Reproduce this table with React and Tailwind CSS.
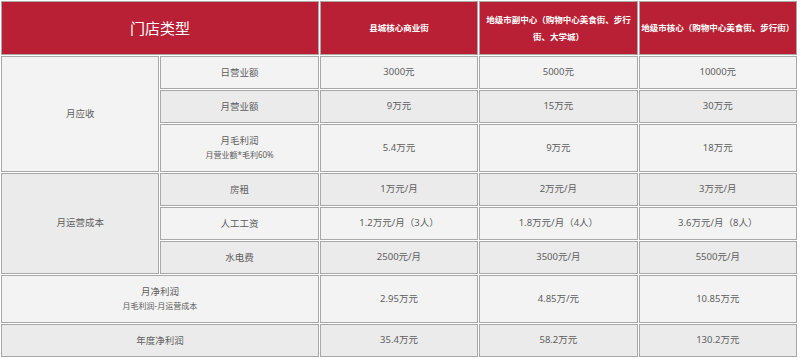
const rows = [
  { group: '月应收', span: 3, label: '日营业额', vals: ['3000元', '5000元', '10000元'] },
  { label: '月营业额', vals: ['9万元', '15万元', '30万元'] },
  { label: '月毛利润', sub: '月营业额*毛利60%', vals: ['5.4万元', '9万元', '18万元'] },
  { group: '月运营成本', span: 3, label: '房租', vals: ['1万元/月', '2万元/月', '3万元/月'] },
  { label: '人工工资', vals: ['1.2万元/月（3人）', '1.8万元/月（4人）', '3.6万元/月（8人）'] },
  { label: '水电费', vals: ['2500元/月', '3500元/月', '5500元/月'] },
  { wide: '月净利润', sub: '月毛利润-月运营成本', vals: ['2.95万元', '4.85万/元', '10.85万元'] },
  { wide: '年度净利润', vals: ['35.4万元', '58.2万元', '130.2万元'] },
];

const cell = 'border border-[#a8a8a8] p-0 text-center align-middle';

export default function App() {
  return (
    <div className="h-[358px] w-[800px] bg-white" style={{ fontFamily: '"Noto Sans", "Noto Sans CJK SC", sans-serif' }}>
      <table className="w-[798px] table-fixed border-separate border-spacing-[1px] bg-white text-[9.5px] text-[#5e5e5e]">
        <colgroup>
          <col className="w-[158.4px]" />
          <col className="w-[158.4px]" />
          <col className="w-[158.4px]" />
          <col className="w-[158.4px]" />
          <col className="w-[158.4px]" />
        </colgroup>
        <thead>
          <tr className="h-[54px] bg-[#b92035] text-white">
            <th colSpan={2} className={`${cell} text-[15px] font-normal`}>门店类型</th>
            <th className={`${cell} text-[8.5px] font-bold`}>县城核心商业街</th>
            <th className={`${cell} text-[8.5px] leading-[17px] font-bold`}>
              地级市副中心（购物中心美食街、步行
              <br />
              街、大学城）
            </th>
            <th className={`${cell} whitespace-nowrap text-[8.5px] font-bold`}>地级市核心（购物中心美食街、步行街）</th>
          </tr>
        </thead>
        <tbody>
          {rows.map((r, i) => {
            const bg = i % 2 === 0 ? 'bg-[#f3f3f3]' : 'bg-[#ebebeb]';
            const h = r.sub ? 'h-[48px]' : 'h-[33px]';
            return (
              <tr key={i} className={h}>
                {r.group && (
                  <td rowSpan={r.span} className={`${cell} ${bg}`}>{r.group}</td>
                )}
                {r.wide ? (
                  <td colSpan={2} className={`${cell} ${bg}`}>
                    <div className="leading-[14px]">{r.wide}</div>
                    {r.sub && <div className="text-[8px] leading-[14px]">{r.sub}</div>}
                  </td>
                ) : (
                  <td className={`${cell} ${bg}`}>
                    <div className="leading-[14px]">{r.label}</div>
                    {r.sub && <div className="text-[8px] leading-[14px]">{r.sub}</div>}
                  </td>
                )}
                {r.vals.map((v, j) => (
                  <td key={j} className={`${cell} ${bg}`}>{v}</td>
                ))}
              </tr>
            );
          })}
        </tbody>
      </table>
    </div>
  );
}
